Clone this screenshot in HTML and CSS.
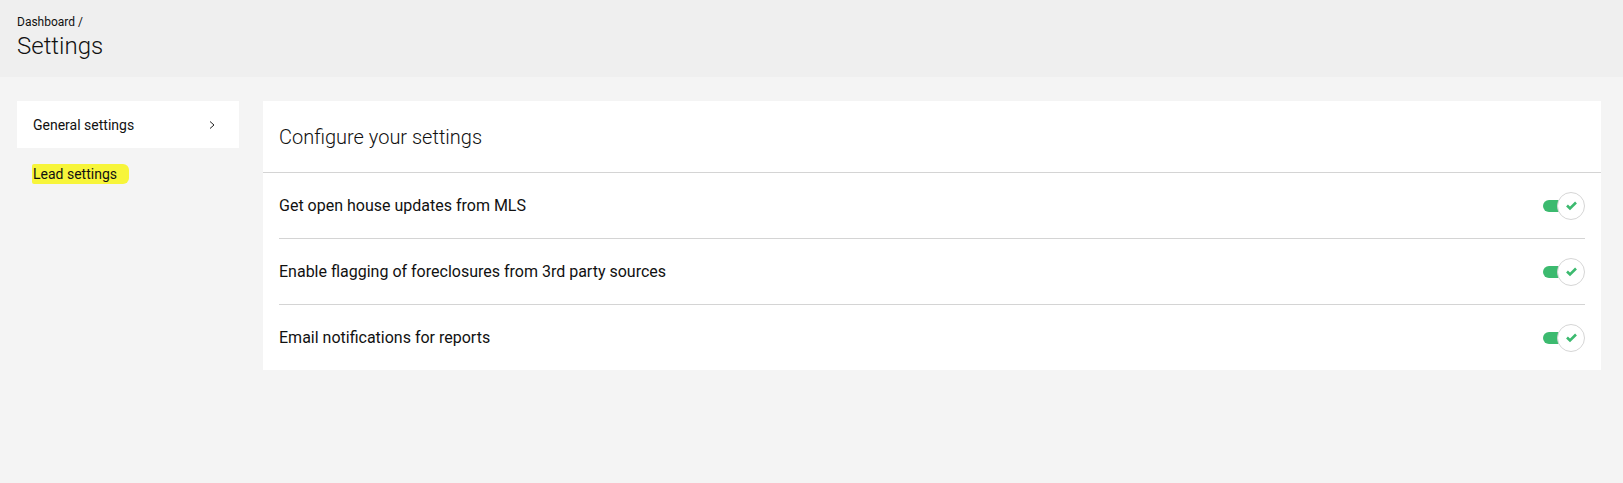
FILE: index.html
```html
<!DOCTYPE html>
<html>
<head>
<meta charset="utf-8">
<link rel="stylesheet" href="styles.css">
</head>
<body>
<header class="page-header">
  <div class="crumb">Dashboard /</div>
  <h1 class="title">Settings</h1>
</header>
<div class="content">
  <nav class="sidebar">
    <div class="nav-card">
      <span>General settings</span>
      <svg class="chev" width="8" height="10" viewBox="0 0 8 10"><path d="M2 1.5 L6 5 L2 8.5" fill="none" stroke="#222" stroke-width="1"/></svg>
    </div>
    <div class="nav-item"><span class="hl">Lead settings</span></div>
  </nav>
  <section class="panel">
    <div class="panel-head">Configure your settings</div>
    <div class="row">
      <span>Get open house updates from MLS</span>
      <span class="toggle"><span class="track"></span><span class="knob"><svg width="13" height="11" viewBox="0 0 13 11"><path d="M2 5.5 L5 8.5 L11 2.5" fill="none" stroke="#3cba6f" stroke-width="2.6"/></svg></span></span>
    </div>
    <div class="row">
      <span>Enable flagging of foreclosures from 3rd party sources</span>
      <span class="toggle"><span class="track"></span><span class="knob"><svg width="13" height="11" viewBox="0 0 13 11"><path d="M2 5.5 L5 8.5 L11 2.5" fill="none" stroke="#3cba6f" stroke-width="2.6"/></svg></span></span>
    </div>
    <div class="row">
      <span>Email notifications for reports</span>
      <span class="toggle"><span class="track"></span><span class="knob"><svg width="13" height="11" viewBox="0 0 13 11"><path d="M2 5.5 L5 8.5 L11 2.5" fill="none" stroke="#3cba6f" stroke-width="2.6"/></svg></span></span>
    </div>
  </section>
</div>
</body>
</html>
```
FILE: styles.css
```css
html, body {
  margin: 0;
  padding: 0;
  background: #f4f4f4;
  font-family: Roboto, "Liberation Sans", sans-serif;
  color: #111;
}
.page-header {
  background: #efefef;
  height: 77px;
  box-sizing: border-box;
  padding: 15px 17px 0;
}
.crumb {
  font-size: 12px;
  line-height: 14px;
}
.title {
  margin: 3px 0 0;
  font-size: 24px;
  font-weight: 300;
  line-height: 28px;
}
.content {
  display: flex;
  gap: 24px;
  padding: 24px 22px 0 17px;
  align-items: flex-start;
}
.sidebar {
  width: 222px;
  flex: none;
}
.nav-card {
  background: #fff;
  height: 47px;
  display: flex;
  align-items: center;
  justify-content: space-between;
  padding: 0 23px 0 16px;
  font-size: 14px;
}
.chev { display: block; }
.nav-item {
  padding: 18px 0 0 15px;
  font-size: 14px;
}
.hl {
  background: #f7f53a;
  padding: 2px 12px 2px 1px;
  border-radius: 2px 6px 6px 2px;
}
.panel {
  flex: 1;
  background: #fff;
}
.panel-head {
  height: 71px;
  display: flex;
  align-items: center;
  padding-left: 16px;
  font-size: 20px;
  font-weight: 300;
  border-bottom: 1px solid #d4d4d4;
}
.row {
  height: 65px;
  margin: 0 16px;
  display: flex;
  align-items: center;
  justify-content: space-between;
  font-size: 16px;
  border-bottom: 1px solid #d4d4d4;
}
.row:last-child { border-bottom: none; }
.toggle {
  position: relative;
  width: 42px;
  height: 28px;
  display: inline-block;
}
.track {
  position: absolute;
  left: 0;
  top: 8px;
  width: 26px;
  height: 12px;
  border-radius: 6px;
  background: #3cba6f;
}
.knob {
  position: absolute;
  right: 0;
  top: 0;
  width: 26px;
  height: 26px;
  border-radius: 50%;
  background: #fff;
  border: 1px solid #d6d6d6;
  display: flex;
  align-items: center;
  justify-content: center;
}
```
